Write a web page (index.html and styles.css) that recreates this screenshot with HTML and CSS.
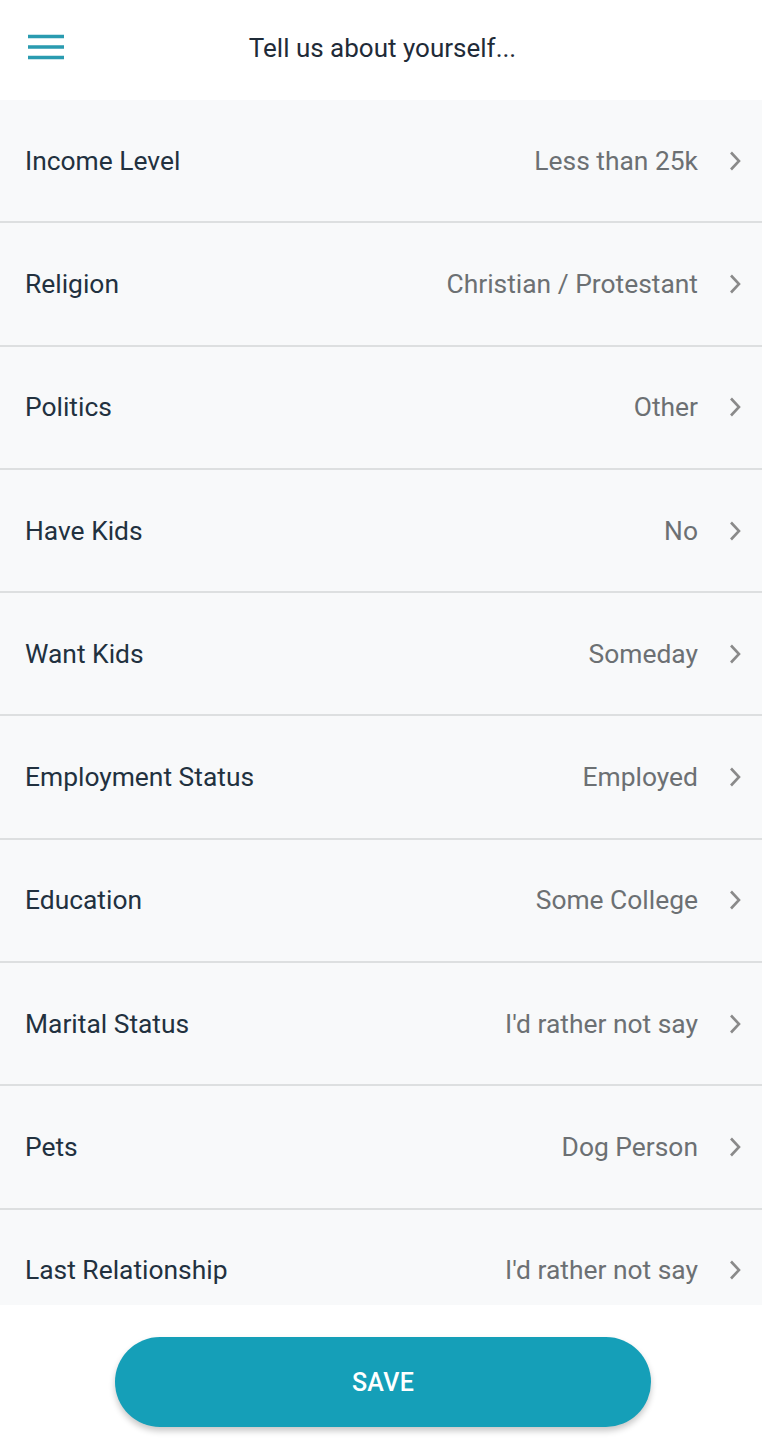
FILE: index.html
```html
<!DOCTYPE html>
<html lang="en">
<head>
<meta charset="utf-8">
<title>Tell us about yourself</title>
<link rel="stylesheet" href="styles.css">
</head>
<body>
<div class="app">
  <header class="topbar">
    <button class="menu" aria-label="Menu">
      <svg width="36" height="26" viewBox="0 0 36 26"><path d="M0 2.5H36M0 13H36M0 23.5H36" stroke="#2a9bb0" stroke-width="3.4" fill="none"/></svg>
    </button>
    <h1 class="title">Tell us about yourself...</h1>
  </header>
  <ul class="list">
    <li class="row"><span class="label">Income Level</span><span class="value">Less than 25k</span><svg class="chev" viewBox="0 0 14 22"><path d="M3 2.5L11 11L3 19.5" fill="none" stroke="#8a8a8a" stroke-width="2.6"/></svg></li>
    <li class="row"><span class="label">Religion</span><span class="value">Christian / Protestant</span><svg class="chev" viewBox="0 0 14 22"><path d="M3 2.5L11 11L3 19.5" fill="none" stroke="#8a8a8a" stroke-width="2.6"/></svg></li>
    <li class="row"><span class="label">Politics</span><span class="value">Other</span><svg class="chev" viewBox="0 0 14 22"><path d="M3 2.5L11 11L3 19.5" fill="none" stroke="#8a8a8a" stroke-width="2.6"/></svg></li>
    <li class="row"><span class="label">Have Kids</span><span class="value">No</span><svg class="chev" viewBox="0 0 14 22"><path d="M3 2.5L11 11L3 19.5" fill="none" stroke="#8a8a8a" stroke-width="2.6"/></svg></li>
    <li class="row"><span class="label">Want Kids</span><span class="value">Someday</span><svg class="chev" viewBox="0 0 14 22"><path d="M3 2.5L11 11L3 19.5" fill="none" stroke="#8a8a8a" stroke-width="2.6"/></svg></li>
    <li class="row"><span class="label">Employment Status</span><span class="value">Employed</span><svg class="chev" viewBox="0 0 14 22"><path d="M3 2.5L11 11L3 19.5" fill="none" stroke="#8a8a8a" stroke-width="2.6"/></svg></li>
    <li class="row"><span class="label">Education</span><span class="value">Some College</span><svg class="chev" viewBox="0 0 14 22"><path d="M3 2.5L11 11L3 19.5" fill="none" stroke="#8a8a8a" stroke-width="2.6"/></svg></li>
    <li class="row"><span class="label">Marital Status</span><span class="value">I'd rather not say</span><svg class="chev" viewBox="0 0 14 22"><path d="M3 2.5L11 11L3 19.5" fill="none" stroke="#8a8a8a" stroke-width="2.6"/></svg></li>
    <li class="row"><span class="label">Pets</span><span class="value">Dog Person</span><svg class="chev" viewBox="0 0 14 22"><path d="M3 2.5L11 11L3 19.5" fill="none" stroke="#8a8a8a" stroke-width="2.6"/></svg></li>
    <li class="row"><span class="label">Last Relationship</span><span class="value">I'd rather not say</span><svg class="chev" viewBox="0 0 14 22"><path d="M3 2.5L11 11L3 19.5" fill="none" stroke="#8a8a8a" stroke-width="2.6"/></svg></li>
  </ul>
  <footer class="footer">
    <button class="save">SAVE</button>
  </footer>
</div>
</body>
</html>
```
FILE: styles.css
```css
* { box-sizing: border-box; }
html, body { margin: 0; padding: 0; background: #ffffff; }
body { font-family: Roboto, "Noto Sans", Arial, sans-serif; }
.app { width: 762px; height: 1449px; display: flex; flex-direction: column; overflow: hidden; }
.topbar { height: 100px; flex: none; display: flex; align-items: center; position: relative; background: #fff; }
.menu { background: none; border: 0; padding: 0; margin-left: 28px; margin-top: -6px; width: 36px; height: 26px; display: flex; }
.title { position: absolute; left: 0; right: 0; top: 33px; margin: 0; text-align: center; font-size: 26px; font-weight: 400; color: #1f2b38; pointer-events: none; padding-left: 3px; }
.list { list-style: none; margin: 0; padding: 0; height: 1205px; flex: none; overflow: hidden; background: #f8f9fa; }
.row { height: 123.3px; display: flex; align-items: center; padding: 0 20px 0 25px; border-bottom: 2px solid #dddfe0; background: #f8f9fa; }
.label { flex: 1; font-size: 26.4px; color: #22313f; }
.value { font-size: 26.4px; color: #6c7073; margin-right: 30px; }
.chev { width: 14px; height: 22px; flex: none; }
.footer { flex: 1; display: flex; justify-content: center; padding-top: 32px; padding-left: 4px; }
.save { width: 536px; height: 90px; border: 0; border-radius: 45px; background: #159fb8; color: #fff; font-family: Roboto, "Noto Sans", Arial, sans-serif; font-size: 25px; font-weight: 500; letter-spacing: 0.3px; box-shadow: 0 4px 6px rgba(0,0,0,0.22); }
```
